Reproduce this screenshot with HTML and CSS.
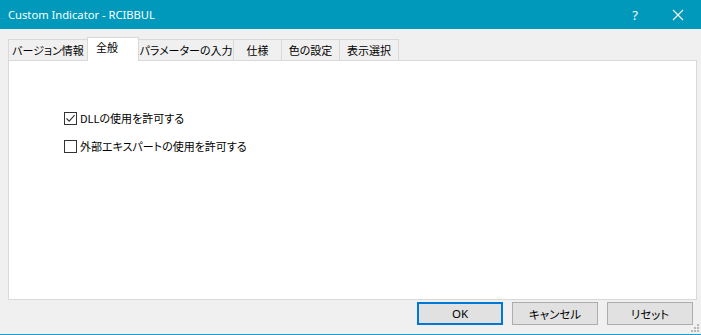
FILE: index.html
```html
<!DOCTYPE html>
<html>
  <head>
    <meta name="viewport" content="width=device-width, initial-scale=1">
    <link rel="stylesheet" href="styles.css">
  </head>
  <body>
    <div class="window">
      <div class="titlebar">
        <span class="title">Custom Indicator - RCIBBUL</span>
        <span class="help">?</span>
        <span class="close">
          <svg width="12" height="12" viewBox="0 0 12 12"><path d="M1 1 L11 11 M11 1 L1 11" stroke="#fff" stroke-width="1.1" fill="none"/></svg>
        </span>
      </div>

      <div class="body">
        <div class="tabs">
          <div class="tab t1">バージョン情報</div>
          <div class="tab t2 active">全般</div>
          <div class="tab t3">パラメーターの入力</div>
          <div class="tab t4">仕様</div>
          <div class="tab t5">色の設定</div>
          <div class="tab t6">表示選択</div>
        </div>

        <div class="panel">
          <label class="check">
            <span class="box checked">
              <svg width="11" height="11" viewBox="0 0 11 11"><path d="M1.5 5.5 L4.2 8.2 L9.6 2.2" stroke="#333" stroke-width="1.1" fill="none"/></svg>
            </span>
            DLLの使用を許可する
          </label>
          <label class="check">
            <span class="box"></span>
            外部エキスパートの使用を許可する
          </label>
        </div>

        <div class="buttons">
          <button class="btn default">OK</button>
          <button class="btn">キャンセル</button>
          <button class="btn">リセット</button>
        </div>
      </div>

      <svg class="grip" width="9" height="9" viewBox="0 0 9 9">
        <rect x="6" y="0" width="2" height="2" fill="#b8b8b8"/>
        <rect x="3" y="3" width="2" height="2" fill="#b8b8b8"/>
        <rect x="6" y="3" width="2" height="2" fill="#b8b8b8"/>
        <rect x="0" y="6" width="2" height="2" fill="#b8b8b8"/>
        <rect x="3" y="6" width="2" height="2" fill="#b8b8b8"/>
        <rect x="6" y="6" width="2" height="2" fill="#b8b8b8"/>
      </svg>
    </div>
  </body>
</html>
```

FILE: styles.css
```css
  /* whole dialog */
  body {
    margin: 0;
    font-family: "Noto Sans", "Noto Sans CJK JP", sans-serif;
    font-size: 12px;
    color: #000;
  }

  .window {
    position: relative;
    width: 701px;
    height: 335px;
    box-sizing: border-box;
    background-color: #f0f0f0;
    border-bottom: 1px solid #1a9fc4;
  }

  /* title bar */
  .titlebar {
    display: flex;
    align-items: center;
    height: 29px;
    background-color: #0099bc;
    color: #ffffff;
  }

  .title {
    padding-left: 8px;
    flex: 1;
    font-size: 11.2px;
  }

  .help {
    width: 46px;
    text-align: center;
    font-size: 13px;
    margin-right: -3px;
  }

  .close {
    display: flex;
    justify-content: center;
    width: 46px;
  }

  .body {
    padding: 8px 0 0 8px;
  }

  /* tabs */
  .tabs {
    display: flex;
    align-items: flex-end;
    height: 23px;
    position: relative;
    z-index: 1;
    font-family: "Noto Sans CJK JP", sans-serif;
    font-feature-settings: "palt";
    font-size: 11px;
  }

  .tab {
    height: 21px;
    line-height: 20px;
    box-sizing: border-box;
    text-align: center;
    border: 1px solid #d9d9d9;
    border-bottom: none;
    margin-left: -1px;
    background-color: #f0f0f0;
  }

  .tab.t1 { width: 80px; margin-left: 0; }
  .tab.t2 { width: 52px; }
  .tab.t3 { width: 96px; }
  .tab.t4 { width: 49px; }
  .tab.t5 { width: 59px; }
  .tab.t6 { width: 60px; }

  .tab.active {
    height: 24px;
    line-height: 19px;
    margin-bottom: -1px;
    background-color: #ffffff;
    text-align: left;
    padding-left: 8px;
  }

  /* white page */
  .panel {
    width: 689px;
    height: 240px;
    box-sizing: border-box;
    background-color: #ffffff;
    border: 1px solid #d9d9d9;
    padding-top: 50px;
    padding-left: 55px;
    font-family: "Noto Sans CJK JP", sans-serif;
    font-feature-settings: "palt";
    font-size: 11px;
  }

  .check {
    display: flex;
    align-items: center;
    height: 14px;
    margin-bottom: 14px;
  }

  .box {
    display: flex;
    align-items: center;
    justify-content: center;
    width: 13px;
    height: 13px;
    box-sizing: border-box;
    border: 1px solid #333333;
    margin-right: 3px;
    background: #ffffff;
  }

  /* buttons */
  .buttons {
    display: flex;
    justify-content: flex-end;
    gap: 9px;
    padding-top: 2px;
    padding-right: 8px;
  }

  .btn {
    width: 86px;
    height: 23px;
    box-sizing: border-box;
    background-color: #e1e1e1;
    border: 1px solid #adadad;
    font-family: "Noto Sans", "Noto Sans CJK JP", sans-serif;
    font-feature-settings: "palt";
    font-size: 11.5px;
    padding: 0;
    color: #000;
  }

  .btn.default {
    border: 2px solid #0078d7;
  }

  .grip {
    position: absolute;
    right: 1px;
    bottom: 1px;
  }
```
